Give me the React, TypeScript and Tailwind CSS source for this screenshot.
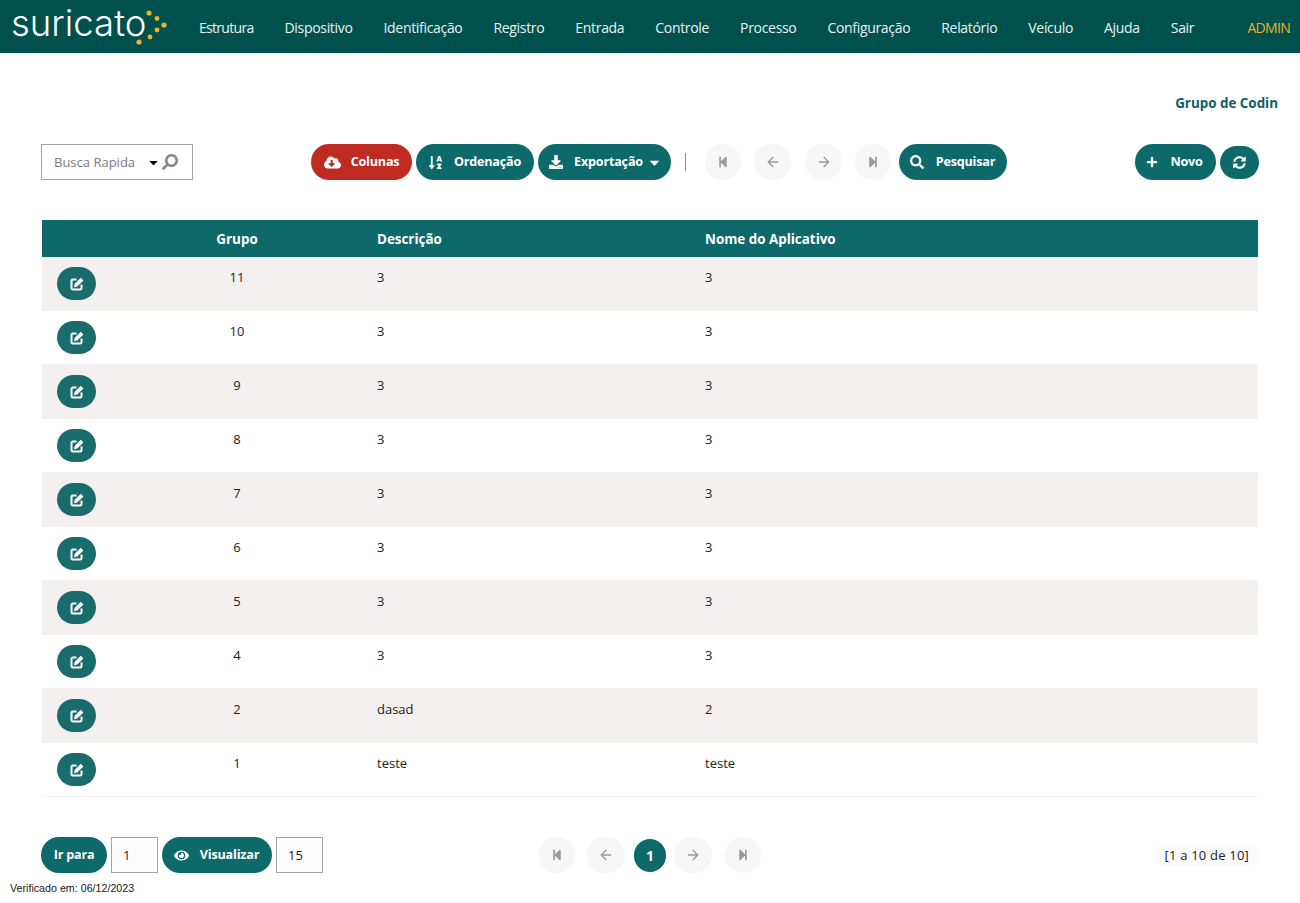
import React from "react";
import {
  FaCaretDown,
  FaCloudDownloadAlt,
  FaDownload,
  FaEye,
  FaPlus,
  FaSearch,
  FaSortAlphaDown,
  FaStepBackward,
  FaStepForward,
  FaSyncAlt,
} from "react-icons/fa";
import { FiArrowLeft, FiArrowRight } from "react-icons/fi";

const menu = [
  "Estrutura",
  "Dispositivo",
  "Identificação",
  "Registro",
  "Entrada",
  "Controle",
  "Processo",
  "Configuração",
  "Relatório",
  "Veículo",
  "Ajuda",
  "Sair",
];

const rows = [
  ["11", "3", "3"],
  ["10", "3", "3"],
  ["9", "3", "3"],
  ["8", "3", "3"],
  ["7", "3", "3"],
  ["6", "3", "3"],
  ["5", "3", "3"],
  ["4", "3", "3"],
  ["2", "dasad", "2"],
  ["1", "teste", "teste"],
];

const Logo = () => (
  <div className="relative w-[170px] h-[53px] shrink-0">
    <span className="absolute left-[11px] top-0 font-['Inter',sans-serif] text-[36.5px] leading-[46px] font-light text-white">
      suricato
    </span>
    <svg className="absolute left-[130px] top-[8px]" width="40" height="40" viewBox="0 0 40 40" fill="#eeb42a">
      <circle cx="19" cy="5" r="2.6" />
      <circle cx="27" cy="10.5" r="2.4" />
      <circle cx="34" cy="17" r="2.6" />
      <circle cx="27" cy="22" r="2.4" />
      <circle cx="20" cy="29" r="2.4" />
      <circle cx="9" cy="34" r="2.6" />
    </svg>
  </div>
);

const EditIcon = () => (
  <svg width="14" height="14" viewBox="0 0 14 14">
    <path
      d="M6.5 2.5H2.8A1.3 1.3 0 0 0 1.5 3.8v7.4a1.3 1.3 0 0 0 1.3 1.3h7.4a1.3 1.3 0 0 0 1.3-1.3V7.5"
      fill="none"
      stroke="white"
      strokeWidth="2"
    />
    <path d="M10.8.8l2.6 2.6-6.2 6.2-3.2.7.6-3.3z" fill="white" />
  </svg>
);

const Pill = ({
  icon,
  label,
  className,
  caret,
}: {
  icon?: React.ReactNode;
  label: string;
  className: string;
  caret?: boolean;
}) => (
  <button className={`flex h-9 items-center justify-center rounded-[18px] text-[12.6px] font-bold tracking-[-0.2px] text-white ${className}`}>
    {icon && <span className="mr-[10px] flex w-[17px] justify-center text-[15px]">{icon}</span>}
    <span className="pt-px">{label}</span>
    {caret && <FaCaretDown className="ml-[4px] text-[15px]" />}
  </button>
);

const Round = ({ children, className = "" }: { children: React.ReactNode; className?: string }) => (
  <span className={`flex h-9 items-center justify-center rounded-full bg-[#f7f7f7] text-[13px] text-[#9a9a9a] ${className}`}>
    {children}
  </span>
);

export default function App() {
  return (
    <div className="h-[903px] overflow-hidden bg-white text-[13px] text-[#212121] font-['Open_Sans','Noto_Sans',sans-serif]">
      <header className="flex h-[53px] items-center bg-[#00514e] pr-[10px]">
        <Logo />
        <nav className="ml-[29px] flex gap-[31px] pt-px text-[14px] text-[#e8f3ef] tracking-[-0.32px]">
          {menu.map((m) => (
            <a key={m} className="first:tracking-[-0.7px]">
              {m}
            </a>
          ))}
        </nav>
        <span className="ml-auto pt-px text-[14px] tracking-[-0.7px] text-[#ecb02e]">ADMIN</span>
      </header>

      <div className="flex justify-end pt-[41px] pr-[22px] text-[13.4px] leading-[18px] font-bold text-[#0e5f63]">
        Grupo de Codin
      </div>

      <div className="mt-[32px] flex h-9 items-center pl-[41px]">
        <div className="flex h-9 w-[152px] items-center border border-[#a3a3a3] pl-3 text-[#7b7b7b]">
          <span className="pt-px">Busca Rapida</span>
          <FaCaretDown className="ml-[12px] text-[13px] text-black" />
          <FaSearch className="ml-[2px] -scale-x-100 text-[16px] text-[#7f8a87]" />
        </div>
        <Pill className="ml-[118px] w-[101px] bg-[#bf2a21]" icon={<FaCloudDownloadAlt className="text-[17px]" />} label="Colunas" />
        <Pill className="ml-[4px] w-[118px] bg-[#0e696b] pr-[2px]" icon={<FaSortAlphaDown />} label="Ordenação" />
        <Pill className="ml-[4px] w-[133px] bg-[#0e696b]" icon={<FaDownload className="text-[14px]" />} label="Exportação" caret />
        <span className="ml-[14px] h-[18px] w-px bg-[#8f8f8f]" />
        <Round className="ml-[19px] w-9"><FaStepBackward className="text-[12px]" /></Round>
        <Round className="ml-[13px] w-[37px]"><FiArrowLeft className="text-[16px]" /></Round>
        <Round className="ml-[14px] w-[37px]"><FiArrowRight className="text-[16px]" /></Round>
        <Round className="ml-[13px] w-9"><FaStepForward className="text-[12px]" /></Round>
        <Pill className="ml-[8px] w-[108px] bg-[#0e696b] pr-[2px]" icon={<FaSearch className="text-[14px]" />} label="Pesquisar" />
        <Pill className="ml-[128px] w-[81px] bg-[#0e696b] pr-[5px]" icon={<FaPlus className="text-[12px]" />} label="Novo" />
        <button className="ml-[4px] flex h-[33px] w-[39px] items-center justify-center rounded-[17px] bg-[#0e696b] text-[13px] text-white">
          <FaSyncAlt />
        </button>
      </div>

      <div className="mx-[42px] mt-[40px] w-[1216px]">
        <div className="grid h-[37px] grid-cols-[100px_190px_373px_1fr] items-center bg-[#0e696b] pt-px text-[13.4px] font-bold text-white">
          <span />
          <span className="text-center">Grupo</span>
          <span className="pl-[45px]">Descrição</span>
          <span>Nome do Aplicativo</span>
        </div>
        {rows.map((r, i) => (
          <div
            key={i}
            className={`grid h-[54px] grid-cols-[100px_190px_373px_1fr] ${i % 2 === 0 ? "bg-[#f4f0ef]" : "border-b border-[#f3f3f3] bg-white"}`}
          >
            <div className="pl-[15px] pt-[10px]">
              <button className="flex h-[33px] w-[39px] items-center justify-center rounded-[17px] bg-[#196b6c] text-white">
                <EditIcon />
              </button>
            </div>
            <span className="pt-[11px] text-center leading-[18px]">{r[0]}</span>
            <span className="pt-[11px] pl-[45px] leading-[18px]">{r[1]}</span>
            <span className="pt-[11px] leading-[18px]">{r[2]}</span>
          </div>
        ))}
      </div>

      <div className="mt-[40px] flex h-9 items-center pl-[41px]">
        <Pill className="w-[66px] bg-[#0e696b]" label="Ir para" />
        <input
          readOnly
          value="1"
          className="ml-[4px] h-9 w-[47px] border border-[#a3a3a3] bg-[#fdfdfd] pl-[11px] text-[13px] outline-none"
        />
        <Pill className="ml-[4px] w-[110px] bg-[#0e696b] pr-[2px]" icon={<FaEye />} label="Visualizar" />
        <input
          readOnly
          value="15"
          className="ml-[4px] h-9 w-[47px] border border-[#a3a3a3] bg-[#fdfdfd] pl-[11px] text-[13px] outline-none"
        />
        <Round className="ml-[216px] w-9"><FaStepBackward className="text-[12px]" /></Round>
        <Round className="ml-[12px] w-[38px]"><FiArrowLeft className="text-[16px]" /></Round>
        <span className="ml-[9px] flex h-[33px] w-[32px] items-center justify-center rounded-full bg-[#0e696b] text-[14px] font-bold text-white">
          1
        </span>
        <Round className="ml-[8px] w-[38px]"><FiArrowRight className="text-[16px]" /></Round>
        <Round className="ml-[13px] w-9"><FaStepForward className="text-[12px]" /></Round>
        <span className="ml-auto mr-[41px] rounded-full bg-[#fbfbfb] px-[10px] leading-[22px] tracking-[0.2px]">
          [1 a 10 de 10]
        </span>
      </div>

      <div className="mt-[9px] pl-[10px] font-['Liberation_Sans',sans-serif] text-[10.7px] leading-[12px] text-[#222]">
        Verificado em: 06/12/2023
      </div>
    </div>
  );
}
